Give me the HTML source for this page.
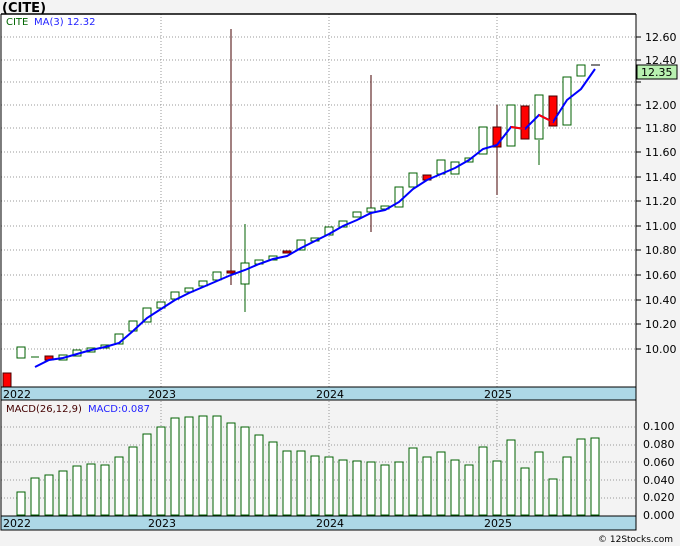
<!DOCTYPE html>
<html><head><style>body{margin:0;background:#f3f3f3;width:680px;height:546px;overflow:hidden}svg{display:block;font-family:"DejaVu Sans","Liberation Sans",sans-serif}</style></head><body>
<svg width="680" height="546" xmlns="http://www.w3.org/2000/svg">
<rect width="680" height="546" fill="#f3f3f3"/>
<text x="2" y="12" font-size="13" font-weight="bold" fill="#000">(CITE)</text>
<rect x="1" y="14" width="635" height="373" fill="#fff"/>
<g stroke="#999" stroke-dasharray="1,2">
<line x1="1" x2="636" y1="37" y2="37"/><line x1="1" x2="636" y1="60" y2="60"/><line x1="1" x2="636" y1="82" y2="82"/><line x1="1" x2="636" y1="105" y2="105"/><line x1="1" x2="636" y1="128" y2="128"/><line x1="1" x2="636" y1="152" y2="152"/><line x1="1" x2="636" y1="177" y2="177"/><line x1="1" x2="636" y1="201" y2="201"/><line x1="1" x2="636" y1="226" y2="226"/><line x1="1" x2="636" y1="250" y2="250"/><line x1="1" x2="636" y1="275" y2="275"/><line x1="1" x2="636" y1="300" y2="300"/><line x1="1" x2="636" y1="324" y2="324"/><line x1="1" x2="636" y1="349" y2="349"/>
<line x1="161" x2="161" y1="14" y2="516"/><line x1="329" x2="329" y1="14" y2="516"/><line x1="497" x2="497" y1="14" y2="516"/>
<line x1="1" x2="636" y1="427" y2="427"/><line x1="1" x2="636" y1="445" y2="445"/><line x1="1" x2="636" y1="462" y2="462"/><line x1="1" x2="636" y1="480" y2="480"/><line x1="1" x2="636" y1="498" y2="498"/>
</g>
<text x="6" y="25" font-size="10" fill="#060">CITE</text><text x="34" y="25" font-size="10" fill="#22f">MA(3)  12.32</text>
<g stroke="#006000" fill="#fff" stroke-width="1">
<line x1="231" y1="29" x2="231" y2="285" stroke="#400"/>
<line x1="371" y1="75" x2="371" y2="232" stroke="#400"/>
<line x1="245" y1="224" x2="245" y2="312"/>
<line x1="497" y1="105" x2="497" y2="195" stroke="#400"/>
<line x1="539" y1="140" x2="539" y2="165"/>
<rect x="17" y="347" width="8" height="11"/><line x1="31" y1="357" x2="39" y2="357"/><rect x="59" y="355" width="8" height="5"/><rect x="73" y="350" width="8" height="6"/><rect x="87" y="348" width="8" height="4"/><rect x="101" y="345" width="8" height="3"/><rect x="115" y="334" width="8" height="10"/><rect x="129" y="321" width="8" height="10"/><rect x="143" y="308" width="8" height="14"/><rect x="157" y="302" width="8" height="6"/><rect x="171" y="292" width="8" height="7"/><rect x="185" y="288" width="8" height="4"/><rect x="199" y="281" width="8" height="5"/><rect x="213" y="272" width="8" height="8"/><rect x="241" y="263" width="8" height="21"/><rect x="255" y="260" width="8" height="4"/><rect x="269" y="256" width="8" height="4"/><rect x="297" y="240" width="8" height="10"/><rect x="311" y="238" width="8" height="3"/><rect x="325" y="227" width="8" height="8"/><rect x="339" y="221" width="8" height="6"/><rect x="353" y="212" width="8" height="5"/><rect x="367" y="208" width="8" height="4"/><rect x="381" y="206" width="8" height="3"/><rect x="395" y="187" width="8" height="20"/><rect x="409" y="173" width="8" height="14"/><rect x="437" y="160" width="8" height="14"/><rect x="451" y="162" width="8" height="12"/><rect x="465" y="158" width="8" height="4"/><rect x="479" y="127" width="8" height="27"/><rect x="507" y="105" width="8" height="41"/><rect x="535" y="95" width="8" height="44"/><rect x="563" y="77" width="8" height="48"/><rect x="577" y="65" width="8" height="11"/><line x1="591" y1="65" x2="600" y2="65" stroke="#000"/>
</g>
<g fill="#f00" stroke="#400">
<rect x="3" y="373" width="8" height="14"/><rect x="45" y="356" width="8" height="4"/><rect x="227" y="271" width="8" height="2"/><rect x="283" y="251" width="8" height="2"/><rect x="423" y="175" width="8" height="5"/><rect x="493" y="127" width="8" height="20"/><rect x="521" y="106" width="8" height="33"/><rect x="549" y="96" width="8" height="30"/>
</g>
<polyline fill="none" stroke="#00f" stroke-width="2" points="35,367 49,360 63,358 77,354 91,350 105,347 119,343 133,331 147,318 161,309 175,300 189,293 203,287 217,281 231,275 245,270 259,264 273,259 287,256 301,248 315,241 329,234 343,226 357,220 371,213 385,210 399,202 413,189 427,180 441,174 455,168 469,160 483,149 497,145 511,127 525,129 539,115 553,122 567,100 581,89 595,69"/>
<polyline fill="none" stroke="#f00" stroke-width="2" points="511,127 525,129"/><polyline fill="none" stroke="#f00" stroke-width="2" points="539,115 553,122"/>
<rect x="1" y="387" width="635" height="13" fill="#add8e6" stroke="#000"/>
<g font-size="11" fill="#000"><text x="3" y="398">2022</text><text x="148" y="398">2023</text><text x="316" y="398">2024</text><text x="484" y="398">2025</text></g>
<text x="6" y="412" font-size="10" fill="#400">MACD(26,12,9)</text><text x="88" y="412" font-size="10" fill="#22f">MACD:0.087</text>
<g fill="#fff" stroke="#006000">
<rect x="17" y="492" width="8" height="23"/><rect x="31" y="478" width="8" height="37"/><rect x="45" y="475" width="8" height="40"/><rect x="59" y="471" width="8" height="44"/><rect x="73" y="466" width="8" height="49"/><rect x="87" y="464" width="8" height="51"/><rect x="101" y="465" width="8" height="50"/><rect x="115" y="457" width="8" height="58"/><rect x="129" y="447" width="8" height="68"/><rect x="143" y="434" width="8" height="81"/><rect x="157" y="427" width="8" height="88"/><rect x="171" y="418" width="8" height="97"/><rect x="185" y="417" width="8" height="98"/><rect x="199" y="416" width="8" height="99"/><rect x="213" y="416" width="8" height="99"/><rect x="227" y="423" width="8" height="92"/><rect x="241" y="427" width="8" height="88"/><rect x="255" y="435" width="8" height="80"/><rect x="269" y="442" width="8" height="73"/><rect x="283" y="451" width="8" height="64"/><rect x="297" y="451" width="8" height="64"/><rect x="311" y="456" width="8" height="59"/><rect x="325" y="457" width="8" height="58"/><rect x="339" y="460" width="8" height="55"/><rect x="353" y="461" width="8" height="54"/><rect x="367" y="462" width="8" height="53"/><rect x="381" y="465" width="8" height="50"/><rect x="395" y="462" width="8" height="53"/><rect x="409" y="448" width="8" height="67"/><rect x="423" y="457" width="8" height="58"/><rect x="437" y="452" width="8" height="63"/><rect x="451" y="460" width="8" height="55"/><rect x="465" y="465" width="8" height="50"/><rect x="479" y="447" width="8" height="68"/><rect x="493" y="461" width="8" height="54"/><rect x="507" y="440" width="8" height="75"/><rect x="521" y="468" width="8" height="47"/><rect x="535" y="452" width="8" height="63"/><rect x="549" y="479" width="8" height="36"/><rect x="563" y="457" width="8" height="58"/><rect x="577" y="439" width="8" height="76"/><rect x="591" y="438" width="8" height="77"/>
</g>
<rect x="1" y="516" width="635" height="14" fill="#add8e6" stroke="#000"/>
<g font-size="11" fill="#000"><text x="3" y="527">2022</text><text x="148" y="527">2023</text><text x="316" y="527">2024</text><text x="484" y="527">2025</text></g>
<line x1="1" y1="14" x2="636" y2="14" stroke="#000" stroke-width="1.5"/>
<line x1="1" y1="14" x2="1" y2="530" stroke="#000"/>
<line x1="636" y1="14" x2="636" y2="530" stroke="#000"/>
<g stroke="#000">
<line x1="636" x2="641" y1="37" y2="37"/><line x1="636" x2="641" y1="60" y2="60"/><line x1="636" x2="641" y1="82" y2="82"/><line x1="636" x2="641" y1="105" y2="105"/><line x1="636" x2="641" y1="128" y2="128"/><line x1="636" x2="641" y1="152" y2="152"/><line x1="636" x2="641" y1="177" y2="177"/><line x1="636" x2="641" y1="201" y2="201"/><line x1="636" x2="641" y1="226" y2="226"/><line x1="636" x2="641" y1="250" y2="250"/><line x1="636" x2="641" y1="275" y2="275"/><line x1="636" x2="641" y1="300" y2="300"/><line x1="636" x2="641" y1="324" y2="324"/><line x1="636" x2="641" y1="349" y2="349"/>
</g>
<g font-size="11" fill="#000">
<text x="645" y="41">12.60</text><text x="645" y="64">12.40</text><text x="645" y="109">12.00</text><text x="645" y="132">11.80</text><text x="645" y="156">11.60</text><text x="645" y="181">11.40</text><text x="645" y="205">11.20</text><text x="645" y="230">11.00</text><text x="645" y="254">10.80</text><text x="645" y="279">10.60</text><text x="645" y="304">10.40</text><text x="645" y="328">10.20</text><text x="645" y="353">10.00</text>
<text x="643" y="430">0.100</text><text x="643" y="448">0.080</text><text x="643" y="466">0.060</text><text x="643" y="484">0.040</text><text x="643" y="501">0.020</text><text x="643" y="519">0.000</text>
</g>
<rect x="637" y="65" width="40" height="14" fill="#b8f0b0" stroke="#000"/>
<text x="641" y="76" font-size="11" fill="#000">12.35</text>
<text x="598" y="542" font-size="9" fill="#000">© 12Stocks.com</text>
</svg>
</body></html>
